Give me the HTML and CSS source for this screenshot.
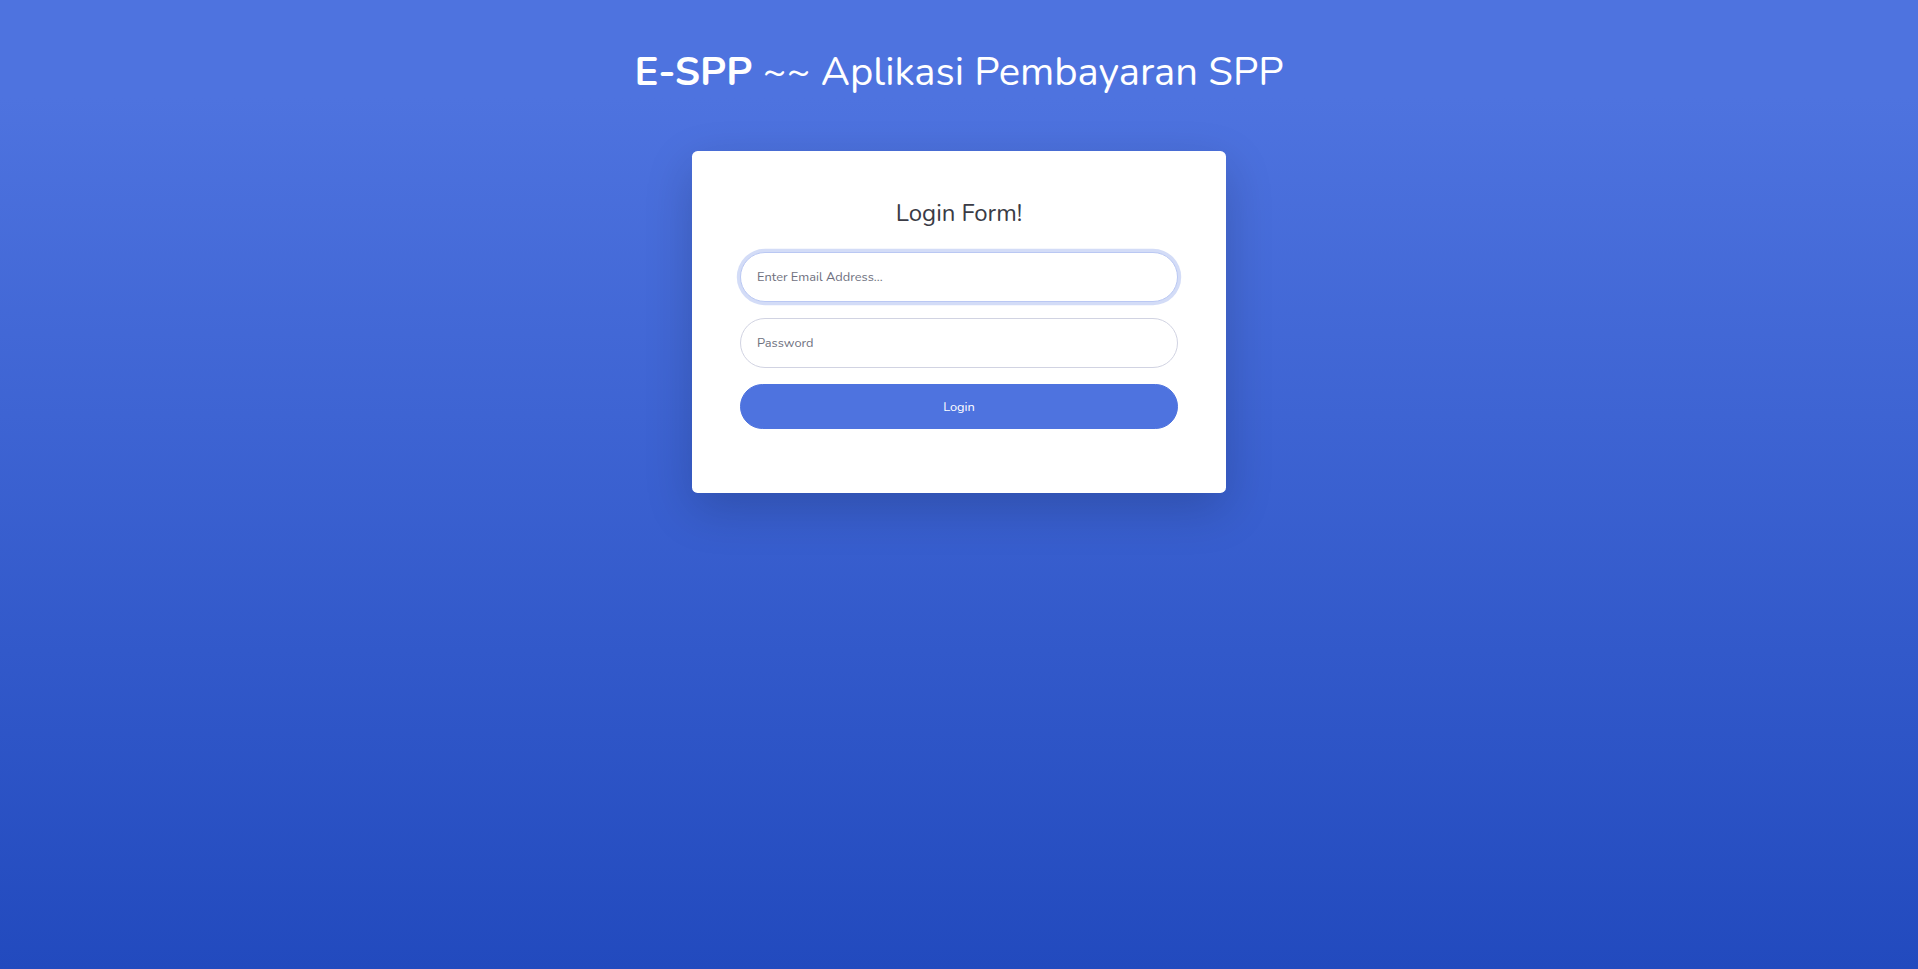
FILE: index.html
```html
<!DOCTYPE html>
<html lang="id">
<head>
<meta charset="utf-8">
<title>E-SPP Login</title>
<link rel="stylesheet" href="styles.css">
</head>
<body class="page">
  <div class="container">
    <h1 class="app-title"><b>E-SPP</b> ~~ Aplikasi Pembayaran SPP</h1>
    <div class="card">
      <h4 class="card-title">Login Form!</h4>
      <form class="login-form">
        <div class="form-group">
          <input class="form-input focused" type="email" placeholder="Enter Email Address...">
        </div>
        <div class="form-group">
          <input class="form-input" type="password" placeholder="Password">
        </div>
        <button class="btn-login" type="button">Login</button>
      </form>
    </div>
  </div>
</body>
</html>
```

FILE: styles.css
```css
* { box-sizing: border-box; }
html, body { margin: 0; padding: 0; height: 100%; }
.page {
  min-height: 969px;
  background: linear-gradient(180deg, #4e73df 10%, #224abe 100%);
  font-family: "Nunito", "Lato", "Noto Sans", sans-serif;
  color: #858796;
}
.container {
  display: flex;
  flex-direction: column;
  align-items: center;
  padding-top: 48px;
}
.app-title {
  margin: 0;
  height: 48px;
  line-height: 48px;
  font-size: 40px;
  font-weight: 400;
  color: #fff;
  text-align: center;
}
.app-title b { font-weight: 700; }
.card {
  margin-top: 55px;
  width: 534px;
  background: #fff;
  border-radius: 5.6px;
  box-shadow: 0 16px 48px rgba(0, 0, 0, 0.175);
  padding: 48px 48px 64px;
}
.card-title {
  margin: 0 0 24px;
  height: 29px;
  line-height: 29px;
  font-size: 24px;
  font-weight: 400;
  color: #3a3b45;
  text-align: center;
}
.login-form { display: flex; flex-direction: column; gap: 16px; }
.form-group { display: flex; }
.form-input {
  width: 100%;
  height: 50px;
  padding: 0 16px;
  border: 1px solid #d1d3e2;
  border-radius: 160px;
  font-family: inherit;
  font-size: 12.8px;
  color: #6e707e;
  background: #fff;
  outline: none;
}
.form-input::placeholder { color: #6e707e; opacity: 1; }
.form-input.focused {
  border-color: #bac8f3;
  box-shadow: 0 0 0 3.2px rgba(78, 115, 223, 0.25);
}
.btn-login {
  height: 45px;
  border: 1px solid #4e73df;
  border-radius: 160px;
  background: #4e73df;
  color: #fff;
  font-family: inherit;
  font-size: 12.8px;
  cursor: pointer;
}
```
